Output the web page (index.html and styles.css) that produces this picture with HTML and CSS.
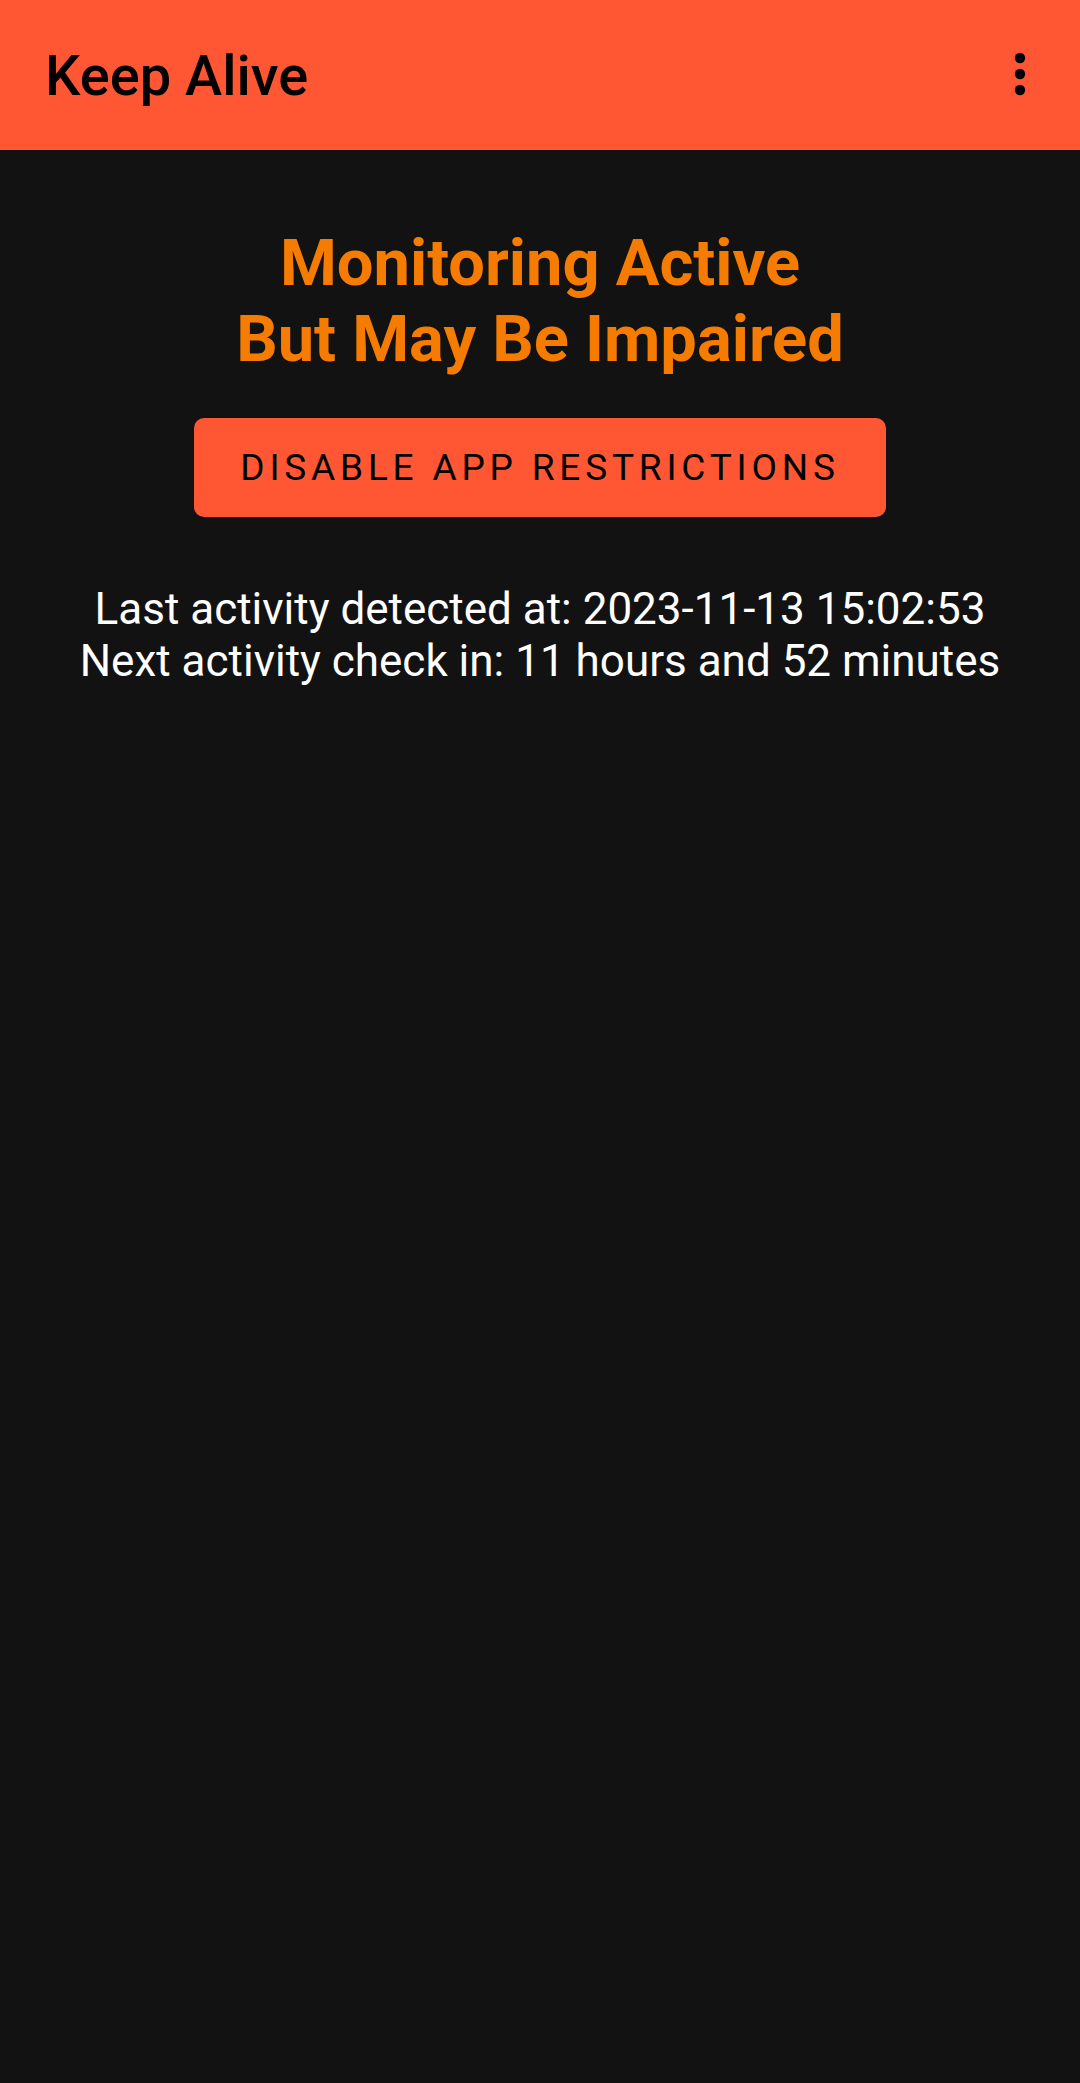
FILE: index.html
```html
<!DOCTYPE html>
<html>
<head>
<meta charset="utf-8">
<link rel="stylesheet" href="styles.css">
</head>
<body>
<header class="appbar">
  <div class="title">Keep Alive</div>
  <div class="menu" aria-label="More options">
    <svg width="12" height="44" viewBox="0 0 12 44"><circle cx="6" cy="6" r="5.2" fill="#000"/><circle cx="6" cy="22" r="5.2" fill="#000"/><circle cx="6" cy="38" r="5.2" fill="#000"/></svg>
  </div>
</header>
<main class="content">
  <h1 class="status">Monitoring Active<br>But May Be Impaired</h1>
  <button class="action">DISABLE APP RESTRICTIONS</button>
  <p class="info">Last activity detected at: 2023-11-13 15:02:53<br>Next activity check in: 11 hours and 52 minutes</p>
</main>
</body>
</html>
```
FILE: styles.css
```css
html, body {
  margin: 0;
  padding: 0;
  background: #121212;
  font-family: Roboto, "Noto Sans", sans-serif;
  height: 100%;
}
.appbar {
  height: 150px;
  background: #ff5733;
  display: flex;
  align-items: center;
  justify-content: space-between;
  padding: 0 54px 0 45px;
  box-sizing: border-box;
}
.title {
  font-size: 56px;
  font-weight: 500;
  color: #000;
  margin-top: 2px;
}
.menu {
  display: flex;
  align-items: center;
  margin-top: -2px;
}
.menu svg { display: block; }
.content {
  display: flex;
  flex-direction: column;
  align-items: center;
  padding-top: 75px;
}
.status {
  margin: 0;
  font-size: 65px;
  line-height: 76px;
  font-weight: 700;
  color: #f57c00;
  text-align: center;
}
.action {
  margin-top: 41px;
  width: 692px;
  height: 99px;
  border: none;
  border-radius: 10px;
  background: #ff5733;
  color: #000;
  font-family: Roboto, "Noto Sans", sans-serif;
  font-size: 37px;
  font-weight: 400;
  letter-spacing: 0.13em;
  padding: 0;
}
.info {
  margin: 66px 0 0;
  font-size: 44px;
  line-height: 52px;
  color: #fff;
  text-align: center;
}
```
